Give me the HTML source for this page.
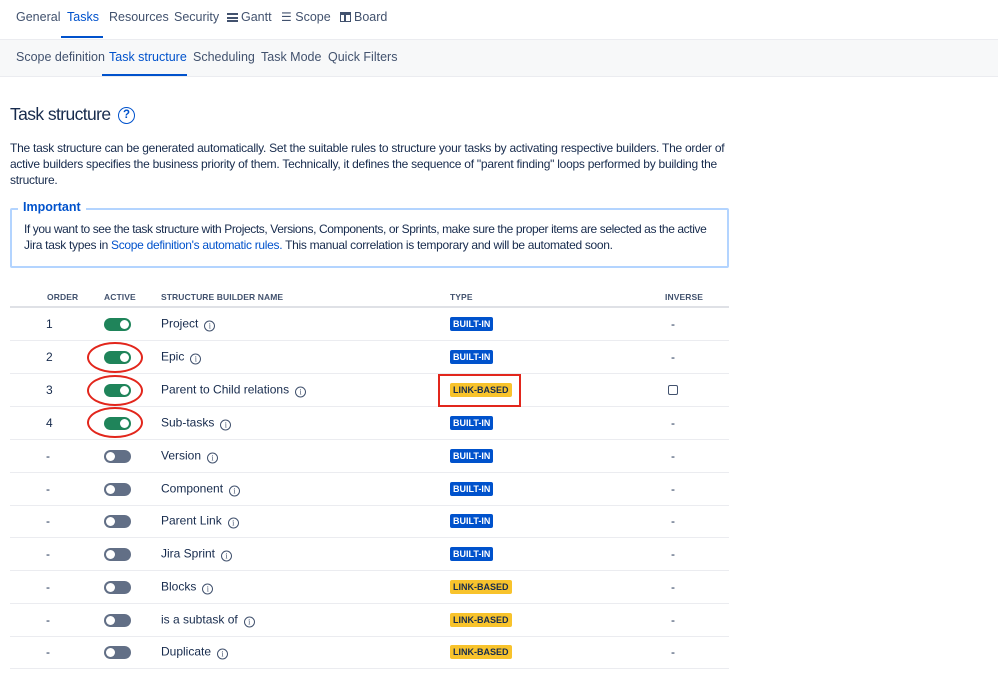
<!DOCTYPE html>
<html><head><meta charset="utf-8"><style>
*{box-sizing:border-box;margin:0;padding:0}
body{width:998px;height:673px;overflow:hidden;background:#fff;font-family:"Liberation Sans",sans-serif;color:#172b4d;position:relative}
.a{position:absolute;white-space:nowrap}
.nav{font-size:12.5px;color:#42526e}
.blue{color:#0052cc}
.p{font-size:12px;line-height:16px;letter-spacing:-0.25px;color:#172b4d}
.th{font-size:8.5px;font-weight:bold;color:#42526e;letter-spacing:0.1px}
.row{position:absolute;left:10px;width:719px;height:33px;border-bottom:1px solid #ebecf0}
.c{position:absolute;top:50%;transform:translateY(-50%);font-size:12px;white-space:nowrap}
.tg{position:absolute;left:94px;top:10px;width:27px;height:13px;border-radius:7px}
.tg.on{background:#1f845a}.tg.off{background:#626f86}
.tg::after{content:"";position:absolute;top:2px;width:9px;height:9px;border-radius:50%;background:#fff}
.tg.on::after{right:2px}.tg.off::after{left:2px}
.i{display:inline-block;width:11px;height:11px;border:1px solid #42526e;border-radius:50%;font-size:8px;line-height:9px;text-align:center;margin-left:6px;vertical-align:-1px;font-family:"Liberation Serif",serif;color:#42526e}
.bdg{position:absolute;left:440px;top:9px;height:14px;padding:0 3px;font-size:9px;font-weight:bold;line-height:14px;border-radius:2px}
.bi{background:#0052cc;color:#fff}.lb{background:#f8c32c;color:#172b4d}
.dash{position:absolute;left:661px;top:9px;font-size:12px;color:#172b4d}
.ell{position:absolute;border:2.5px solid #e2261c;border-radius:50%;width:56px;height:31px;left:87px}
</style></head><body>
<div class="a nav" style="left:16px;top:10px">General</div>
<div class="a nav blue" style="left:67px;top:10px">Tasks</div>
<div class="a" style="left:61px;top:36px;width:42px;height:2px;background:#0052cc"></div>
<div class="a nav" style="left:109px;top:10px">Resources</div>
<div class="a nav" style="left:174px;top:10px">Security</div>
<div class="a nav" style="left:227px;top:10px"><span style="display:inline-block;width:11px;height:9px;border-top:2px solid #42526e;border-bottom:2px solid #42526e;position:relative;vertical-align:-1px;margin-right:3px"><span style="position:absolute;left:0;right:0;top:1.5px;height:2px;background:#42526e"></span></span>Gantt</div>
<div class="a nav" style="left:281px;top:10px"><span style="font-size:12px">☰</span> Scope</div>
<div class="a nav" style="left:340px;top:10px"><span style="display:inline-block;width:11px;height:10px;border:1.5px solid #42526e;border-top-width:3px;vertical-align:-1px;margin-right:3px;position:relative"><span style="position:absolute;left:3px;top:0;bottom:0;width:1.5px;background:#42526e"></span></span>Board</div>
<div class="a" style="left:0;top:39px;width:998px;height:38px;background:#f7f8f9;border-top:1px solid #ebecf0;border-bottom:1px solid #ebecf0"></div>
<div class="a nav" style="left:16px;top:50px">Scope definition</div>
<div class="a nav blue" style="left:109px;top:50px">Task structure</div>
<div class="a" style="left:102px;top:74px;width:85px;height:2px;background:#0052cc"></div>
<div class="a nav" style="left:193px;top:50px">Scheduling</div>
<div class="a nav" style="left:261px;top:50px">Task Mode</div>
<div class="a nav" style="left:328px;top:50px">Quick Filters</div>

<div class="a" style="left:10px;top:104px;font-size:17.5px;letter-spacing:-0.6px;color:#172b4d">Task structure</div>
<div class="a" style="left:118px;top:107px;width:17px;height:17px;border:1.8px solid #0052cc;border-radius:50%;color:#0052cc;font-size:11.5px;font-weight:bold;text-align:center;line-height:14px">?</div>

<div class="a p" style="left:10px;top:140px;width:730px;white-space:normal">The task structure can be generated automatically. Set the suitable rules to structure your tasks by activating respective builders. The order of active builders specifies the business priority of them. Technically, it defines the sequence of "parent finding" loops performed by building the structure.</div>

<div class="a" style="left:10px;top:208px;width:719px;height:60px;border:2px solid #b3d4ff;border-radius:2px"></div>
<div class="a" style="left:18px;top:200px;background:#fff;padding:0 5px;font-size:12.5px;font-weight:bold;color:#0052cc">Important</div>
<div class="a p" style="left:24px;top:221px;letter-spacing:-0.4px">If you want to see the task structure with Projects, Versions, Components, or Sprints, make sure the proper items are selected as the active</div>
<div class="a p" style="left:24px;top:237px;letter-spacing:-0.3px">Jira task types in <span class="blue">Scope definition's automatic rules.</span> This manual correlation is temporary and will be automated soon.</div>

<div class="a th" style="left:47px;top:292px">ORDER</div>
<div class="a th" style="left:104px;top:292px">ACTIVE</div>
<div class="a th" style="left:161px;top:292px">STRUCTURE BUILDER NAME</div>
<div class="a th" style="left:450px;top:292px">TYPE</div>
<div class="a th" style="left:665px;top:292px">INVERSE</div>
<div class="a" style="left:10px;top:306px;width:719px;height:2px;background:#dfe1e6"></div>

<div class="row" style="top:308px"><div class="c" style="left:36px">1</div><div class="tg on"></div><div class="c" style="left:151px">Project<span class="i">i</span></div><div class="bdg bi">BUILT-IN</div><div class="dash">-</div></div>
<div class="row" style="top:341px"><div class="c" style="left:36px">2</div><div class="tg on"></div><div class="c" style="left:151px">Epic<span class="i">i</span></div><div class="bdg bi">BUILT-IN</div><div class="dash">-</div></div>
<div class="row" style="top:374px"><div class="c" style="left:36px">3</div><div class="tg on"></div><div class="c" style="left:151px">Parent to Child relations<span class="i">i</span></div><div class="bdg lb">LINK-BASED</div><div style="position:absolute;left:658px;top:11px;width:10px;height:10px;border:1.3px solid #42526e;border-radius:2px"></div></div>
<div class="row" style="top:407px"><div class="c" style="left:36px">4</div><div class="tg on"></div><div class="c" style="left:151px">Sub-tasks<span class="i">i</span></div><div class="bdg bi">BUILT-IN</div><div class="dash">-</div></div>
<div class="row" style="top:440px"><div class="c" style="left:36px">-</div><div class="tg off"></div><div class="c" style="left:151px">Version<span class="i">i</span></div><div class="bdg bi">BUILT-IN</div><div class="dash">-</div></div>
<div class="row" style="top:473px"><div class="c" style="left:36px">-</div><div class="tg off"></div><div class="c" style="left:151px">Component<span class="i">i</span></div><div class="bdg bi">BUILT-IN</div><div class="dash">-</div></div>
<div class="row" style="top:505px"><div class="c" style="left:36px">-</div><div class="tg off"></div><div class="c" style="left:151px">Parent Link<span class="i">i</span></div><div class="bdg bi">BUILT-IN</div><div class="dash">-</div></div>
<div class="row" style="top:538px"><div class="c" style="left:36px">-</div><div class="tg off"></div><div class="c" style="left:151px">Jira Sprint<span class="i">i</span></div><div class="bdg bi">BUILT-IN</div><div class="dash">-</div></div>
<div class="row" style="top:571px"><div class="c" style="left:36px">-</div><div class="tg off"></div><div class="c" style="left:151px">Blocks<span class="i">i</span></div><div class="bdg lb">LINK-BASED</div><div class="dash">-</div></div>
<div class="row" style="top:604px"><div class="c" style="left:36px">-</div><div class="tg off"></div><div class="c" style="left:151px">is a subtask of<span class="i">i</span></div><div class="bdg lb">LINK-BASED</div><div class="dash">-</div></div>
<div class="row" style="top:636px"><div class="c" style="left:36px">-</div><div class="tg off"></div><div class="c" style="left:151px">Duplicate<span class="i">i</span></div><div class="bdg lb">LINK-BASED</div><div class="dash">-</div></div>

<div class="ell" style="top:342px"></div>
<div class="ell" style="top:375px"></div>
<div class="ell" style="top:407px"></div>
<div class="a" style="left:438px;top:374px;width:83px;height:33px;border:2.5px solid #e2261c"></div>
</body></html>
